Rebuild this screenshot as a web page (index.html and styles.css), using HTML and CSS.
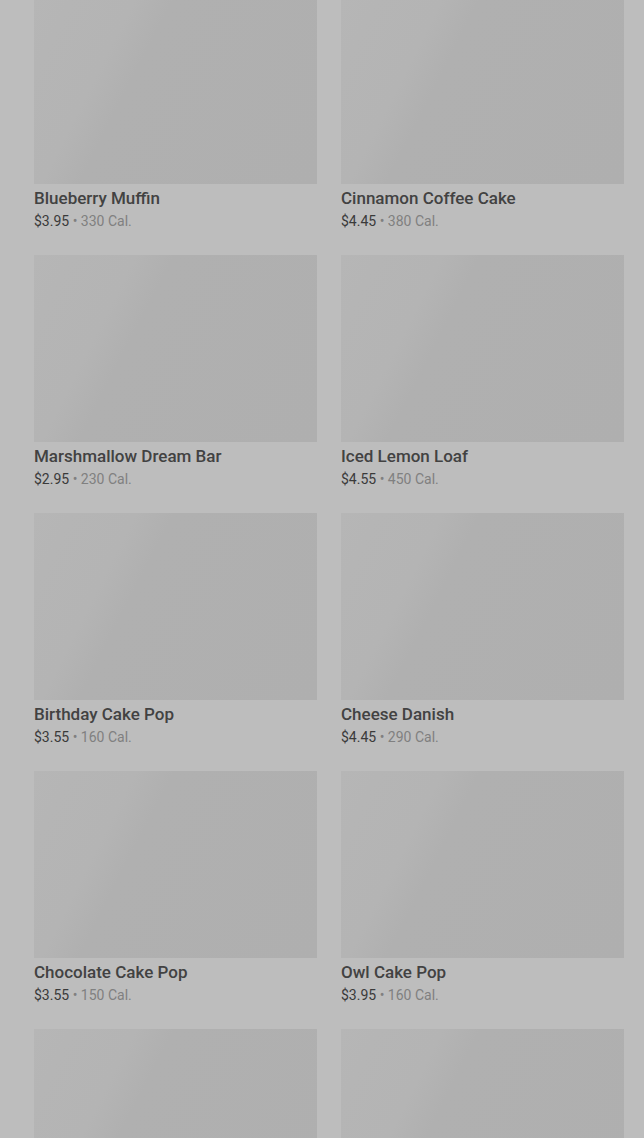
FILE: index.html
```html
<!DOCTYPE html>
<html lang="en">
<head>
<meta charset="utf-8">
<link rel="stylesheet" href="styles.css">
</head>
<body>
<main class="grid">
  <div class="card"><div class="thumb"></div><div class="name">Blueberry Muffin</div><div class="meta"><span class="price">$3.95</span> <span class="cal">• 330 Cal.</span></div></div>
  <div class="card"><div class="thumb"></div><div class="name">Cinnamon Coffee Cake</div><div class="meta"><span class="price">$4.45</span> <span class="cal">• 380 Cal.</span></div></div>
  <div class="card"><div class="thumb"></div><div class="name">Marshmallow Dream Bar</div><div class="meta"><span class="price">$2.95</span> <span class="cal">• 230 Cal.</span></div></div>
  <div class="card"><div class="thumb"></div><div class="name">Iced Lemon Loaf</div><div class="meta"><span class="price">$4.55</span> <span class="cal">• 450 Cal.</span></div></div>
  <div class="card"><div class="thumb"></div><div class="name">Birthday Cake Pop</div><div class="meta"><span class="price">$3.55</span> <span class="cal">• 160 Cal.</span></div></div>
  <div class="card"><div class="thumb"></div><div class="name">Cheese Danish</div><div class="meta"><span class="price">$4.45</span> <span class="cal">• 290 Cal.</span></div></div>
  <div class="card"><div class="thumb"></div><div class="name">Chocolate Cake Pop</div><div class="meta"><span class="price">$3.55</span> <span class="cal">• 150 Cal.</span></div></div>
  <div class="card"><div class="thumb"></div><div class="name">Owl Cake Pop</div><div class="meta"><span class="price">$3.95</span> <span class="cal">• 160 Cal.</span></div></div>
  <div class="card"><div class="thumb"></div></div>
  <div class="card"><div class="thumb"></div></div>
</main>
</body>
</html>
```
FILE: styles.css
```css
html, body {
  margin: 0;
  padding: 0;
  background: #bdbdbd;
  overflow: hidden;
}
body {
  font-family: Roboto, "Liberation Sans", sans-serif;
}
.grid {
  display: grid;
  grid-template-columns: 283px 283px;
  column-gap: 24px;
  row-gap: 24px;
  padding: 0 20px 0 34px;
  margin-top: -3px;
}
.card {
  display: flex;
  flex-direction: column;
  height: 234px;
}
.thumb {
  height: 187px;
  flex: none;
  background: linear-gradient(117deg, #b6b6b6 0%, #b5b5b5 10%, #b4b4b4 27%, #b0b0b0 37%, #afafaf 100%);
}
.name {
  margin-top: 3px;
  font-size: 17px;
  line-height: 22px;
  font-weight: 500;
  color: #424242;
}
.meta {
  margin-top: 2px;
  font-size: 14px;
  line-height: 20px;
}
.price {
  color: #3a3a3a;
}
.cal {
  color: #808080;
}
```
